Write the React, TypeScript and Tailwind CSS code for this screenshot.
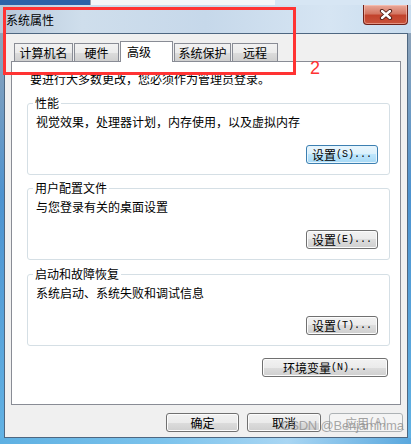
import React from "react";

type BtnProps = {
  cjk: string;
  ascii?: string;
  w: string;
  variant?: "normal" | "focused" | "disabled";
};

function WinButton({ cjk, ascii, w, variant = "normal" }: BtnProps) {
  const base =
    "h-[19px] rounded-[3px] border flex items-center justify-center leading-none shrink-0";
  const styles =
    variant === "focused"
      ? "border-[#3c7fb1] bg-[linear-gradient(#eaf6fd_0%,#d9f0fc_50%,#bee6fd_50%,#a7d9f5_100%)] shadow-[inset_0_0_0_1px_#e6f5fd] text-black"
      : variant === "disabled"
      ? "border-[#adb2b5] bg-[#f4f4f4] text-[#a0a0a0]"
      : "border-[#707070] bg-[linear-gradient(#f2f2f2_0%,#ebebeb_50%,#dddddd_50%,#cfcfcf_100%)] shadow-[inset_0_0_0_1px_#fcfcfc] text-black";
  return (
    <div className={`${base} ${styles} ${w}`}>
      <span className="text-[12px]">{cjk}</span>
      {ascii ? (
        <span className="font-['Liberation_Mono',monospace] text-[10px]">{ascii}</span>
      ) : null}
    </div>
  );
}

function GroupBox({
  title,
  desc,
  btn,
  extra,
}: {
  title: string;
  desc: string;
  btn: React.ReactNode;
  extra: string;
}) {
  return (
    <fieldset
      className={`ml-[15px] w-[363px] border border-[#d5dfe5] rounded-[3px] px-[8px] pb-[10px] ${extra}`}
    >
      <legend className="ml-[-3px] px-[2px] leading-[14px] text-[12px]">{title}</legend>
      <div className="mt-[5px] leading-[14px] text-[12px]">{desc}</div>
      <div className="mt-[16px] flex justify-end pr-[3px]">{btn}</div>
    </fieldset>
  );
}

function Tab({ label, w, selected }: { label: string; w: string; selected?: boolean }) {
  if (selected) {
    return (
      <div
        className={`relative z-10 h-[21px] -mb-px border border-b-0 border-[#898c95] bg-white flex items-start pl-[6px] pt-[3px] leading-[14px] text-[12px] ${w}`}
      >
        {label}
      </div>
    );
  }
  return (
    <div
      className={`h-[18px] border border-b-0 border-[#898c95] bg-[linear-gradient(#f2f2f2_0%,#ebebeb_50%,#dddddd_50%,#cfcfcf_100%)] flex items-center justify-center leading-[14px] text-[12px] ${w}`}
    >
      {label}
    </div>
  );
}

export default function App() {
  return (
    <div className="relative w-[411px] h-[444px] overflow-hidden flex flex-col font-['Noto_Sans_CJK_SC',sans-serif] text-black bg-[#5aa8de]">
      {/* strip behind window */}
      <div className="h-[5px] flex shrink-0">
        <div className="w-[90px] bg-[#2d62a8]" />
        <div className="w-px bg-[#9aa4ad]" />
        <div className="w-[184px] bg-[#f4f6f8]" />
        <div className="flex-1 bg-[#d7e6f4]" />
      </div>
      {/* title bar */}
      <div className="h-[28px] shrink-0 flex items-start bg-[linear-gradient(90deg,#b8c9da_0%,#cfdeec_20%,#c6d8ea_50%,#d6e5f3_80%,#c8dcee_100%)]">
        <div className="pl-[6px] pt-[8px] leading-[14px] text-[12px] text-black">系统属性</div>
        <div className="flex-1" />
        <div className="mr-[3px] w-[45px] h-[20px] rounded-b-[4px] border border-t-0 border-[#6f2118] bg-[linear-gradient(#e9a99a_0%,#d47763_45%,#c2432c_55%,#c9533b_100%)] shadow-[inset_0_0_0_1px_rgba(255,210,200,0.5)] flex items-center justify-center">
          <svg width="14" height="11" viewBox="0 0 14 11">
            <path d="M3 2 L11 9 M11 2 L3 9" stroke="#4a1a12" strokeWidth="4.2" strokeLinecap="round" />
            <path d="M3 2 L11 9 M11 2 L3 9" stroke="#ffffff" strokeWidth="2.4" strokeLinecap="round" />
          </svg>
        </div>
      </div>
      {/* body */}
      <div className="h-[405px] shrink-0 flex">
        <div className="w-[4px] bg-[linear-gradient(#8ea3b9_0%,#4d93d0_40%,#62b2e4_100%)]" />
        <div className="w-[404px] border border-[#4e6781] bg-[#f0f0f0] flex flex-col pt-[7px]">
          {/* tabs */}
          <div className="h-[20px] flex items-end pl-[9px] gap-px">
            <Tab label="计算机名" w="w-[59px]" />
            <Tab label="硬件" w="w-[45px]" />
            <Tab label="高级" w="w-[53px]" selected />
            <Tab label="系统保护" w="w-[57px]" />
            <Tab label="远程" w="w-[46px]" />
          </div>
          {/* panel */}
          <div className="ml-[6px] w-[390px] h-[344px] border border-[#898c95] bg-white flex flex-col pt-[10px]">
            <div className="pl-[18px] leading-[14px] text-[12px]">要进行大多数更改，您必须作为管理员登录。</div>
            <GroupBox
              title="性能"
              desc="视觉效果，处理器计划，内存使用，以及虚拟内存"
              btn={<WinButton cjk="设置" ascii="(S)..." w="w-[72px]" variant="focused" />}
              extra="mt-[10px]"
            />
            <GroupBox
              title="用户配置文件"
              desc="与您登录有关的桌面设置"
              btn={<WinButton cjk="设置" ascii="(E)..." w="w-[72px]" />}
              extra="mt-[6px]"
            />
            <GroupBox
              title="启动和故障恢复"
              desc="系统启动、系统失败和调试信息"
              btn={<WinButton cjk="设置" ascii="(T)..." w="w-[72px]" />}
              extra="mt-[7px]"
            />
            <div className="mt-[12px] flex justify-end pr-[12px]">
              <WinButton cjk="环境变量" ascii="(N)..." w="w-[126px]" />
            </div>
          </div>
          {/* bottom buttons */}
          <div className="mt-[8px] flex justify-end pr-[4px] gap-[8px]">
            <WinButton cjk="确定" w="w-[73px]" />
            <WinButton cjk="取消" w="w-[74px]" />
            <WinButton cjk="应用" ascii="(A)" w="w-[74px]" variant="disabled" />
          </div>
        </div>
        <div className="w-[3px] bg-[linear-gradient(#8ea3b9_0%,#4d93d0_40%,#62b2e4_100%)]" />
      </div>
      {/* bottom frame */}
      <div className="h-[6px] shrink-0 bg-[linear-gradient(90deg,#5eb0e2_0%,#7cc3ec_40%,#a9d6f3_70%,#5aa8de_100%)]" />

      {/* annotation overlay */}
      <div className="absolute left-[3px] top-[7px] w-[293px] h-[68px] border-[3px] border-[#ff3333] pointer-events-none" />
      <div className="absolute left-[310px] top-[58px] text-[18px] leading-[20px] text-[#ff3333] font-['Liberation_Sans',sans-serif]">
        2
      </div>
      {/* watermark */}
      <div className="absolute left-[281px] top-[418px] z-20 whitespace-nowrap text-[13px] leading-[16px] tracking-[-0.2px] text-[rgba(140,140,140,0.75)] font-['Liberation_Sans',sans-serif]">
        CSDN @Benjaminma
      </div>
    </div>
  );
}
